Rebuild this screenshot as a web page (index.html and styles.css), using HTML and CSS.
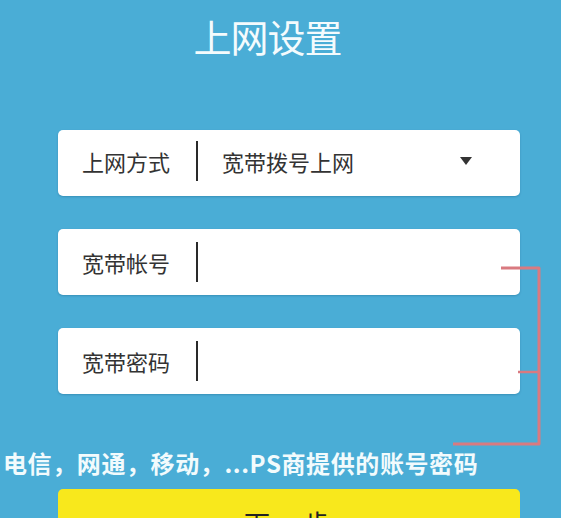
FILE: index.html
```html
<!DOCTYPE html>
<html lang="zh-CN">
<head>
<meta charset="utf-8">
<title>上网设置</title>
<link rel="stylesheet" href="styles.css">
</head>
<body>
<div class="page">
  <h1 class="title">上网设置</h1>
  <div class="form">
    <div class="field field-select">
      <span class="label">上网方式</span>
      <span class="divider"></span>
      <span class="value">宽带拨号上网</span>
      <span class="caret"></span>
    </div>
    <div class="field">
      <span class="label">宽带帐号</span>
      <span class="divider"></span>
    </div>
    <div class="field">
      <span class="label">宽带密码</span>
      <span class="divider"></span>
    </div>
  </div>
  <p class="note">电信，网通，移动，...PS商提供的账号密码</p>
  <div class="next">下一步</div>
  <svg class="bracket" width="561" height="518" viewBox="0 0 561 518">
    <path d="M501 268 H539 V444 H453" fill="none" stroke="#d97a80" stroke-width="3" stroke-linejoin="round"/>
    <path d="M518 372 H539" fill="none" stroke="#d97a80" stroke-width="2.5"/>
  </svg>
</div>
</body>
</html>
```

FILE: styles.css
```css
html, body {
  margin: 0;
  padding: 0;
  height: 100%;
  overflow: hidden;
}
body {
  background: #4aadd6;
  font-family: "Noto Sans CJK SC", "Noto Sans", sans-serif;
}
.page {
  position: relative;
  width: 561px;
  height: 518px;
  display: flex;
  flex-direction: column;
  overflow: hidden;
}
.title {
  margin: 17px 0 0 0;
  padding-right: 26px;
  font-size: 38px;
  line-height: 38px;
  font-weight: 400;
  color: #f4fbfd;
  text-align: center;
  letter-spacing: -1px;
}
.form {
  margin: 75px 0 0 58px;
  width: 462px;
  display: flex;
  flex-direction: column;
  gap: 33px;
}
.field {
  height: 66px;
  background: #ffffff;
  border-radius: 5px;
  box-shadow: 0 1px 2px rgba(0, 60, 100, 0.25);
  display: flex;
  align-items: center;
  padding-left: 24px;
  box-sizing: border-box;
  color: #333333;
  font-size: 22px;
}
.field-select {
  padding-bottom: 5px;
}
.label {
  width: 90px;
  line-height: 22px;
  white-space: nowrap;
}
.divider {
  width: 2px;
  height: 40px;
  background: #2a2a2a;
  margin-left: 24px;
}
.value {
  margin-left: 24px;
  line-height: 22px;
  flex: 1;
}
.caret {
  width: 0;
  height: 0;
  border-left: 6px solid transparent;
  border-right: 6px solid transparent;
  border-top: 8px solid #333333;
  margin-right: 48px;
}
.note {
  margin: 55px 0 0 3px;
  font-size: 24px;
  line-height: 28px;
  font-weight: 700;
  color: #f2fbfd;
  white-space: nowrap;
  letter-spacing: 0.6px;
}
.next {
  margin: 12px 0 0 58px;
  width: 462px;
  height: 66px;
  flex-shrink: 0;
  background: #f8e81c;
  border-radius: 5px;
  display: flex;
  align-items: center;
  justify-content: center;
  font-size: 26px;
  color: #222222;
  letter-spacing: 4px;
}
.bracket {
  position: absolute;
  left: 0;
  top: 0;
  pointer-events: none;
}
```
